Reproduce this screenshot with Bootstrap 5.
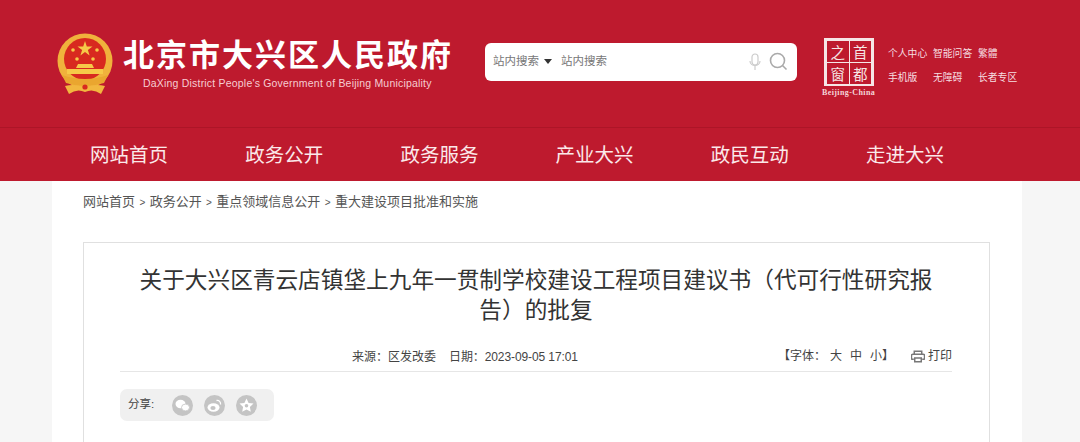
<!DOCTYPE html>
<html lang="zh-CN">
<head>
  <meta charset="UTF-8" />
  <meta name="viewport" content="width=device-width, initial-scale=1.0"/>
  <title>北京市大兴区人民政府</title>
  <link href="https://cdn.jsdelivr.net/npm/bootstrap@5.3.0/dist/css/bootstrap.min.css" rel="stylesheet"/>
  <style>
    html, body { height: 442px; overflow: hidden; }
    body {
      background: #f6f6f6;
      font-family: "Liberation Sans", "Noto Sans CJK SC", sans-serif;
      color: #444;
    }
    .site-top { height: 127px; background: #be1a2e; padding: 0 64px 0 57px; }
    .site-name { color: #fff; font-size: 31px; font-weight: 700; line-height: 36px; letter-spacing: 2px; white-space: nowrap; }
    .site-en { color: #f6cdd2; font-size: 10.5px; line-height: 13px; letter-spacing: .2px; margin-left: 20px; margin-top: 3px; white-space: nowrap; }
    .search-bar { width: 312px; height: 38px; background: #fff; border-radius: 6px; margin-left: 32px; margin-bottom: 4px; padding: 0 9px 0 8px; color: #777; font-size: 11.5px; }
    .search-caret { width: 0; height: 0; border: 4px solid transparent; border-top: 5px solid #333; border-bottom: 0; margin: 0 9px 0 5px; }
    .capital-mark { width: 50px; margin-left: 27px; margin-top: 7px; color: #fff; }
    .capital-en { font-family: "Liberation Serif", serif; font-size: 8px; font-weight: 700; letter-spacing: .4px; line-height: 9px; white-space: nowrap; margin: 2px 0 0 -2px; color: #f4d5d8; }
    .capital-box { width: 50px; height: 48px; border: 3px solid #f6e6e6; background: #f6e6e6; display: grid; grid-template-columns: 1fr 1fr; gap: 1px; font-size: 14.5px; line-height: 21px; text-align: center; color: #f6e6e6; font-family: "Noto Sans CJK SC", serif; }
    .capital-box span { background: #be1a2e; }
    .top-links { margin-left: 14px; margin-top: 4px; color: #f6dfe1; font-size: 9.8px; line-height: 14px; row-gap: 10px; display: grid; grid-template-columns: 45px 45px auto; }
    .main-nav { height: 54px; background: #be1a2e; border-top: 1px solid #ad1527; padding-left: 90px; }
    .main-nav a { color: #fbe9ea; font-size: 19.5px; width: 155.2px; text-decoration: none; line-height: 54px; white-space: nowrap; }
    .page-wrap { width: 970px; height: 261px; margin-left: 52px; background: #fff; padding: 0 32px 0 31px; }
    .crumbs { height: 61px; font-size: 13px; line-height: 42px; color: #555; white-space: nowrap; }
    .crumbs span { font-size: 10px; margin: 0 4.4px; }
    .article-box { height: 220px; border: 1px solid #e0e0e0; padding: 22px 37px 0 36px; }
    .article-title { font-size: 22.66px; line-height: 30px; color: #333; text-align: center; font-weight: 400; margin: 0 auto; width: 802px; }
    .meta-row { height: 27px; margin-top: 20px; border-bottom: 1px solid #e6e6e6; font-size: 12px; line-height: 24px; color: #444; }
    .meta-info { margin-left: 232px; white-space: nowrap; }
    .meta-date { margin-left: 13px; letter-spacing: -.1px; }
    .meta-tools { margin-left: auto; white-space: nowrap; height: 22px; }
    .font-big { margin-left: 4px; }
    .font-mid { margin: 0 8px; }
    .print-icon { margin: 0 3px 0 17px; }
    .share-bar { width: 154px; height: 32px; border-radius: 7px; background: #f0f0f0; margin-top: 17px; padding-left: 8px; font-size: 11.5px; color: #444; gap: 11px; }
    .share-bar span { margin-right: 7px; }
  </style>
</head>
<body>

<header class="site-top d-flex align-items-center">
  <svg width="58" height="62" viewBox="0 0 58 62" class="flex-shrink-0">
    <circle cx="28" cy="28" r="27.5" fill="#f0b23c"/>
    <circle cx="28" cy="26" r="21" fill="#d8291f"/>
    <polygon points="28,8 29.8,13.5 35.5,13.5 30.9,16.9 32.6,22.4 28,19 23.4,22.4 25.1,16.9 20.5,13.5 26.2,13.5" fill="#f6c948"/>
    <circle cx="16" cy="17" r="1.8" fill="#f6c948"/><circle cx="40" cy="17" r="1.8" fill="#f6c948"/>
    <circle cx="20" cy="26" r="1.8" fill="#f6c948"/><circle cx="36" cy="26" r="1.8" fill="#f6c948"/>
    <path d="M21 31h14l2 4H19z" fill="#f6c948"/>
    <rect x="10" y="36" width="36" height="5" fill="#f6c948"/>
    <path d="M5 42 Q28 50 51 42 L47 50 Q28 56 9 50 Z" fill="#eaa62f"/>
    <path d="M8 53 Q18 50 28 55 Q38 50 48 53 L44 61 Q36 55 28 59 Q20 55 12 61 Z" fill="#f2b73f"/>
    <circle cx="28" cy="54" r="2.6" fill="#d8291f"/>
  </svg>
  <div class="ms-2">
    <div class="site-name">北京市大兴区人民政府</div>
    <div class="site-en">DaXing District People's Government of Beijing Municipality</div>
  </div>
  <div class="search-bar d-flex align-items-center flex-shrink-0">
    <span>站内搜索</span><i class="search-caret"></i><span>站内搜索</span>
    <svg class="ms-auto" width="12" height="18" viewBox="0 0 12 18" fill="none" stroke="#ccc" stroke-width="1.2"><rect x="3" y="1" width="6" height="11" rx="3"/><path d="M1 8c0 6 10 6 10 0M6 13v4"/></svg>
    <svg class="ms-2" width="19" height="19" viewBox="0 0 19 19" fill="none" stroke="#aaa" stroke-width="1.6"><circle cx="8.5" cy="8.5" r="7"/><path d="M13.5 13.5l4 4"/></svg>
  </div>
  <div class="capital-mark flex-shrink-0">
    <div class="capital-box"><span>之</span><span>首</span><span>窗</span><span>都</span></div>
    <div class="capital-en">Beijing-China</div>
  </div>
  <div class="top-links flex-shrink-0">
    <span>个人中心</span><span>智能问答</span><span>繁體</span>
    <span>手机版</span><span>无障碍</span><span>长者专区</span>
  </div>
</header>

<nav class="main-nav d-flex">
  <a href="#">网站首页</a>
  <a href="#">政务公开</a>
  <a href="#">政务服务</a>
  <a href="#">产业大兴</a>
  <a href="#">政民互动</a>
  <a href="#">走进大兴</a>
</nav>

<main class="page-wrap">
  <div class="crumbs">网站首页<span>&gt;</span>政务公开<span>&gt;</span>重点领域信息公开<span>&gt;</span>重大建设项目批准和实施</div>
  <section class="article-box">
    <h1 class="article-title">关于大兴区青云店镇垡上九年一贯制学校建设工程项目建议书（代可行性研究报告）的批复</h1>
    <div class="meta-row d-flex">
      <div class="meta-info">来源：区发改委<span class="meta-date">日期：2023-09-05 17:01</span></div>
      <div class="meta-tools d-flex align-items-center">【字体：<span class="font-big">大</span><span class="font-mid">中</span><span>小</span>】
        <svg class="print-icon" width="14" height="13" viewBox="0 0 15 13" fill="none" stroke="#777" stroke-width="1.6"><path d="M3.5 4V1h8v3M3 9.5H1.5a1 1 0 0 1-1-1V5.5a1.5 1.5 0 0 1 1.5-1.5h11a1.5 1.5 0 0 1 1.5 1.5v3a1 1 0 0 1-1 1H12M4 8h7v4H4z"/></svg>打印
      </div>
    </div>
    <div class="share-bar d-flex align-items-center">
      <span>分享:</span>
      <svg width="21" height="21" viewBox="0 0 21 21"><circle cx="10.5" cy="10.5" r="10.5" fill="#c4c4c4"/><ellipse cx="8.5" cy="9" rx="5" ry="4.2" fill="#fff"/><ellipse cx="13.5" cy="12.5" rx="4" ry="3.4" fill="#fff" stroke="#c4c4c4" stroke-width=".8"/></svg>
      <svg width="21" height="21" viewBox="0 0 21 21"><circle cx="10.5" cy="10.5" r="10.5" fill="#c4c4c4"/><ellipse cx="9.5" cy="12.5" rx="6" ry="4.2" fill="#fff"/><ellipse cx="9" cy="13" rx="2.6" ry="2" fill="#c4c4c4"/><path d="M12.5 5.5c2.5-.5 4.5 1.5 4 4" fill="none" stroke="#fff" stroke-width="1.3"/></svg>
      <svg width="21" height="21" viewBox="0 0 21 21"><circle cx="10.5" cy="10.5" r="10.5" fill="#c4c4c4"/><polygon points="10.5,3.5 12.6,8 17.5,8.6 13.9,12 14.8,16.8 10.5,14.4 6.2,16.8 7.1,12 3.5,8.6 8.4,8" fill="#fff"/><circle cx="10.5" cy="10.8" r="1.8" fill="#c4c4c4"/></svg>
    </div>
  </section>
</main>

</body>
</html>
